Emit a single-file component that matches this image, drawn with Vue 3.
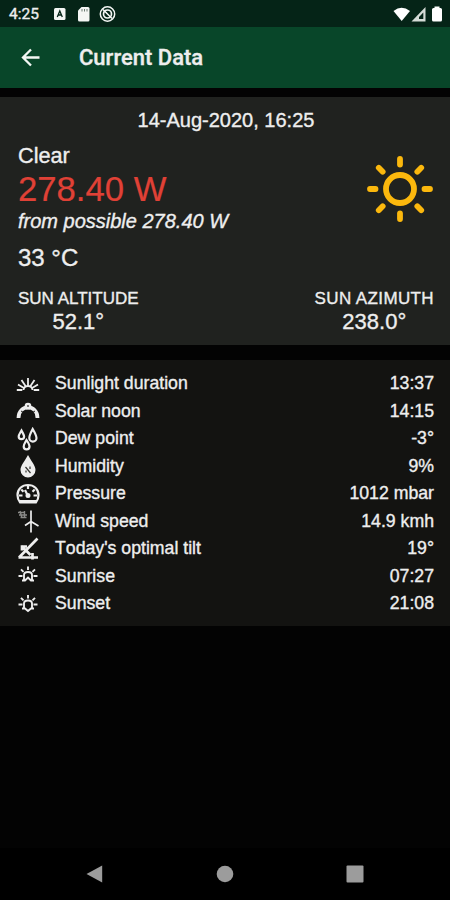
<template>
  <div class="screen">
    <div class="status-bar">
      <span class="clock">4:25</span>
      <svg class="status-left" width="66" height="20" viewBox="0 0 66 20">
        <rect x="3" y="4" width="11.5" height="12" rx="1.5" fill="#f4f6f4" />
        <path d="M6.3 13 8.8 7l2.5 6M7.2 11h3.2" fill="none" stroke="#052417" stroke-width="1.3" />
        <path d="M30.5 3H37q1.500 0 1.500 1.500V16q0 1.500-1.500 1.500H28.500Q27 17.500 27 16V6.500Z" fill="#f4f6f4" />
        <path d="M31 5v2.500M33.500 5v2.500M36 5v2.500" stroke="#6b7b72" stroke-width="1" />
        <circle cx="56.500" cy="10" r="7.200" fill="none" stroke="#f4f6f4" stroke-width="1.500" />
        <circle cx="56.500" cy="10" r="4" fill="none" stroke="#f4f6f4" stroke-width="1.700" />
        <path d="m52 5.500 9 9M55 8.500l3.500 3.500" stroke="#f4f6f4" stroke-width="1.600" />
      </svg>
      <svg class="status-right" width="52" height="20" viewBox="0 0 52 20">
        <path d="M.5 7Q8.500.500 17 7L8.700 17Z" fill="#fff" />
        <path d="M32.500 3v14.500H18.500Z" fill="#d5dbd7" />
        <path d="M30.300 8.500v6.500H26V13Z" fill="#052417" />
        <path d="M41.500 2.500h5V4h1q1.500 0 1.500 1.500V16q0 1.500-1.500 1.500h-7Q39 17.500 39 16V5.500Q39 4 40.500 4h1Z" fill="#fff" />
      </svg>
    </div>

    <header class="toolbar">
      <svg class="back" width="20" height="20" viewBox="0 0 20 20">
        <path d="M18.500 9.500H2M10 1.500l-8 8 8 8" />
      </svg>
      <h1>Current Data</h1>
    </header>

    <section class="card">
      <div class="date">14-Aug-2020, 16:25</div>
      <div class="current">
        <div>
          <div class="condition">Clear</div>
          <div class="power">278.40 W</div>
          <div class="possible">from possible 278.40 W</div>
          <div class="temperature">33 °C</div>
        </div>
        <svg class="sun" width="68" height="68" viewBox="-34 -34 68 68">
          <circle r="14" />
          <line
            v-for="angle in rays"
            :key="angle"
            y1="-24.500"
            y2="-30"
            :transform="`rotate(${angle})`"
          />
        </svg>
      </div>
      <div class="position">
        <div>
          <div class="label">SUN ALTITUDE</div>
          <div class="degrees">52.1°</div>
        </div>
        <div>
          <div class="label label--azimuth">SUN AZIMUTH</div>
          <div class="degrees">238.0°</div>
        </div>
      </div>
    </section>

    <section class="list">
      <div v-for="item in items" :key="item.name" class="row">
        <svg class="icon" width="24" height="24" viewBox="0 0 24 24">
          <path v-if="item.dim" class="dim" :d="item.dim" />
          <path
            v-if="item.line"
            class="line"
            :d="item.line"
            :stroke-width="item.width"
          />
          <path v-if="item.fill" class="solid" :d="item.fill" />
          <path v-if="item.cut" class="cut" :d="item.cut" />
        </svg>
        <span class="name">{{ item.name }}</span>
        <span class="value">{{ item.value }}</span>
      </div>
    </section>

    <nav class="nav-bar">
      <svg width="18" height="18" viewBox="0 0 18 18">
        <path d="M.5 9 16.200.5v17Z" />
      </svg>
      <svg width="18" height="18" viewBox="0 0 18 18">
        <circle cx="9" cy="9" r="8.300" />
      </svg>
      <svg width="18" height="18" viewBox="0 0 18 18">
        <rect x=".5" y=".5" width="17" height="17" rx="1" />
      </svg>
    </nav>
  </div>
</template>

<script setup>
const rays = [0, 45, 90, 135, 180, 225, 270, 315];

const items = [
  {
    name: "Sunlight duration",
    value: "13:37",
    line: "M.8 18h5.500M17.700 18h5.500M2 12.500l5.500 3.200M5.500 8l4 6M12 6v7.500M18.500 8l-4 6M22 12.500l-5.500 3.200M7.500 18q.5-4 4.500-4t4.500 4",
    width: 1.8,
  },
  {
    name: "Solar noon",
    value: "14:15",
    line: "M2.500 19C2.500 4.800 21.500 4.800 21.500 19",
    width: 3.8,
    fill: "M12 3.800a3.400 3.400 0 1 1 0 6.800 3.400 3.400 0 1 1 0-6.800Z",
    cut: "M12 6v2M5.300 12l1.200 1M18.700 12l-1.200 1",
  },
  {
    name: "Dew point",
    value: "-3°",
    line: "M5.500 3.500C3.500 7 2.700 8 2.700 9.500a2.700 2.700 0 0 0 5.400 0C8.100 8 7 6.500 5.500 3.500ZM16.700 2C14 7 13.300 8.500 13.300 11a3.600 3.600 0 0 0 7.200 0C20.500 8.500 19 6 16.700 2ZM10.500 13C8.500 16.500 7.700 17.500 7.700 19.500a2.900 2.900 0 0 0 5.800 0C13.500 17.500 12.500 16 10.500 13Z",
    width: 2.2,
  },
  {
    name: "Humidity",
    value: "9%",
    fill: "M12 1C8.500 7.500 4.500 11.500 4.500 16a7.500 7.500 0 0 0 15 0C19.500 11.500 15.500 7.500 12 1Z",
    cut: "m9.500 13 5 6M10 16.500v2M14 12.500v2.500",
  },
  {
    name: "Pressure",
    value: "1012 mbar",
    line: "M4 20.300Q1.500 17.500 1.500 13C1.500 7 6 3 12 3s10.500 4 10.500 10Q22.500 17.500 20 20.300ZM12 14 9 8M3 13.500h3.500M17.500 13.500H21M5.300 7.500l2.200 2.200M18.700 7.500l-2.200 2.200M12 4v3",
    width: 2.2,
    fill: "M12 11a2.500 2.500 0 1 1 0 5 2.500 2.500 0 1 1 0-5ZM3.500 18h17l-1 2.500h-15Z",
  },
  {
    name: "Wind speed",
    value: "14.9 kmh",
    line: "M15 13v10.500M15 12.500V1.500M15 12.500l7.500 4.500M15 12.500 9 16.500",
    width: 1.7,
    dim: "M2 3.500h7M3 6h8M4.500 8.500h6M4 2l2 7M8.500 2v7",
  },
  {
    name: "Today's optimal tilt",
    value: "19°",
    line: "M3 20.500 21.500 1.500M2.500 20.500H22M5.500 9l9 9M6 13.500V9.500h5M16.500 16v6.500",
    width: 2.7,
  },
  {
    name: "Sunrise",
    value: "07:27",
    line: "M2.500 12h4M17.500 12h4M12 2.500v3.500M5 5.300l2.500 2.500M19 5.300l-2.500 2.500M8 16v-5q0-3 4-3t4 3v5M6 16.500h3l3-3 3 3h3",
    width: 1.9,
  },
  {
    name: "Sunset",
    value: "21:08",
    line: "M2.500 12.500h4M17.500 12.500h4M12 3v3.500M5 5.800l2.500 2.500M19 5.800l-2.500 2.500M8 16.500v-5q0-3 4-3t4 3v5M6 16.500h3l3 2.500 3-2.500h3",
    width: 1.9,
  },
];
</script>

<style>
body {
  background: #030303;
}
</style>

<style scoped>
.screen {
  display: flex;
  flex-direction: column;
  width: 450px;
  height: 900px;
  overflow: hidden;
  background: #030303;
  color: #eeeeee;
  font-family: "Liberation Sans", Arial, sans-serif;
  -webkit-text-stroke: 0.35px currentColor;
}

svg {
  flex: none;
}

.status-bar {
  display: flex;
  align-items: center;
  height: 27px;
  padding: 0 5px 0 9px;
  background: #052417;
}
.clock {
  width: 42px;
  font-family: Roboto, sans-serif;
  font-size: 15.5px;
  font-weight: 400;
}
.status-right {
  margin-left: auto;
}

.toolbar {
  display: flex;
  align-items: center;
  height: 61px;
  padding-left: 21px;
  background: #084629;
}
.toolbar h1 {
  margin: 0 0 0 38px;
  font-family: Roboto, sans-serif;
  font-size: 22px;
  font-weight: 500;
  line-height: 28px;
}
.back {
  fill: none;
  stroke: #f3f7f4;
  stroke-width: 2.3;
}

.card {
  box-sizing: border-box;
  height: 248px;
  margin-top: 9px;
  padding: 11px 16px 0 18px;
  background: #20221f;
}
.date {
  font-size: 20px;
  line-height: 24px;
  text-align: center;
}
.current {
  display: flex;
  justify-content: space-between;
  margin-top: 11px;
}
.condition {
  font-size: 21.7px;
  line-height: 26px;
}
.power {
  color: #e04136;
  font-size: 34.7px;
  line-height: 40px;
  -webkit-text-stroke-width: 0.2px;
}
.possible {
  font-size: 20px;
  font-style: italic;
  line-height: 24px;
}
.temperature {
  margin-top: 11px;
  font-size: 24px;
  line-height: 28px;
}
.sun {
  margin-top: 12px;
  fill: none;
  stroke: #fbb80d;
  stroke-width: 5.8;
  stroke-linecap: round;
}
.position {
  display: flex;
  justify-content: space-between;
  margin-top: 16px;
  text-align: center;
}
.label {
  font-size: 17px;
  line-height: 22px;
}
.label--azimuth {
  letter-spacing: 0.38px;
}
.degrees {
  font-size: 22px;
  line-height: 26px;
}
.label + .degrees {
  margin-top: -1px;
}

.list {
  margin-top: 15px;
  padding: 10px 16px 8.5px;
  background: #131311;
}
.row {
  display: flex;
  align-items: center;
  height: 27.5px;
  font-size: 17.7px;
  font-kerning: none;
}
.name {
  margin-left: 15px;
}
.value {
  margin-left: auto;
}
.solid {
  fill: #eeeeee;
}
.line {
  fill: none;
  stroke: #eeeeee;
}
.cut {
  fill: none;
  stroke: #33332f;
  stroke-width: 1.2;
}
.dim {
  fill: none;
  stroke: #8a8a88;
  stroke-width: 1.4;
}

.nav-bar {
  display: flex;
  align-items: center;
  justify-content: space-between;
  height: 52px;
  margin-top: auto;
  padding: 0 86px;
  background: #000000;
}
.nav-bar svg {
  fill: #9c9c9c;
}
</style>
